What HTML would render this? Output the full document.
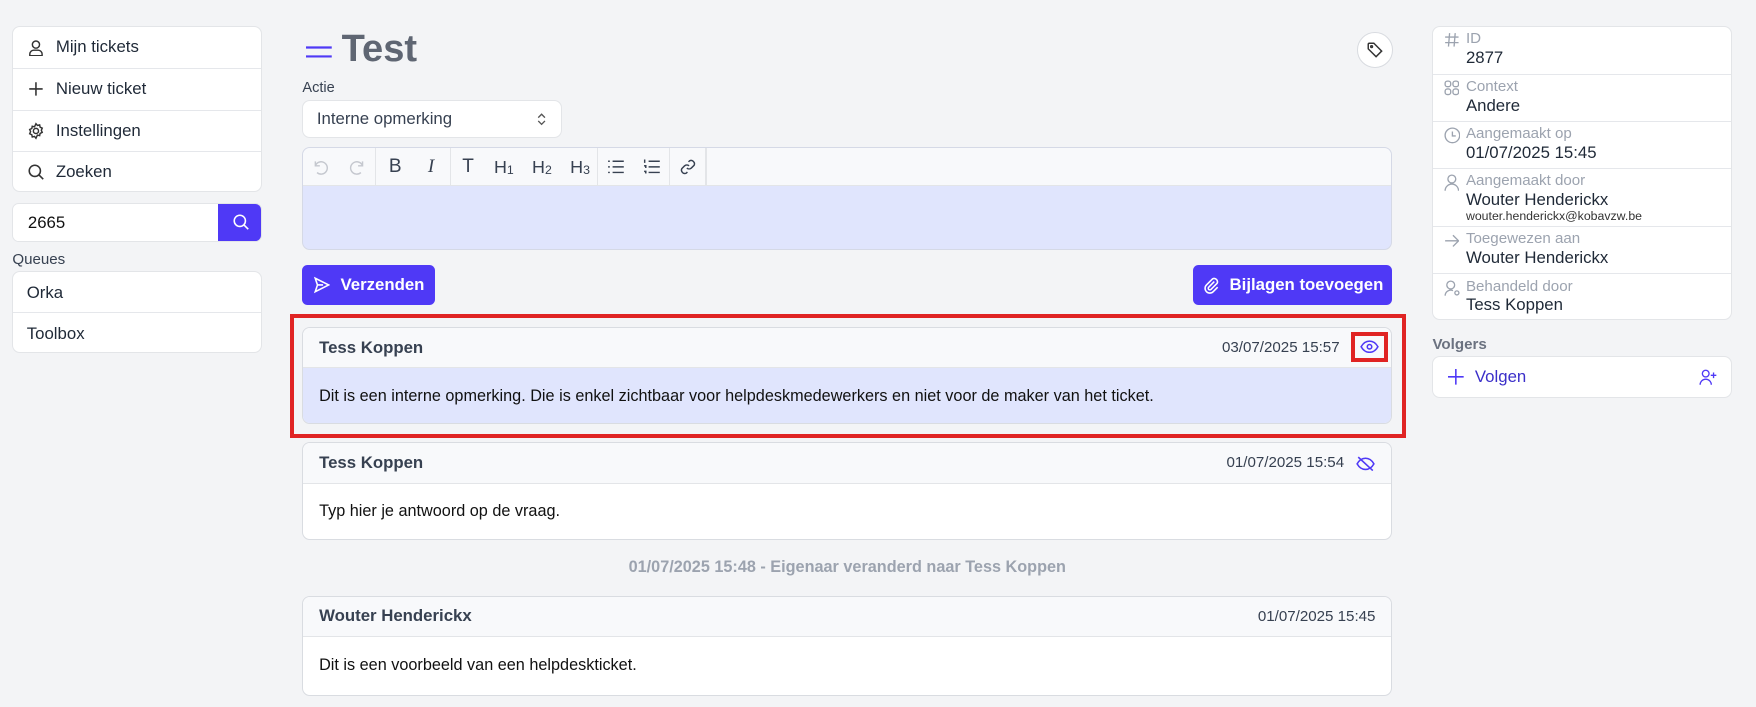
<!DOCTYPE html>
<html><head><meta charset="utf-8">
<style>
html,body{margin:0;padding:0;background:#f3f4f6;overflow:hidden}
body{width:1756px;height:707px}
#w{position:relative;width:1568px;height:631px;zoom:1.12;font-family:"Liberation Sans",sans-serif;color:#1f2937;font-size:15px}
.a{position:absolute}
.card{position:absolute;background:#fff;border:1px solid #e3e5e8;border-radius:7px;box-sizing:border-box;overflow:hidden}
.mi{position:absolute;left:0;right:0;height:37px;display:flex;align-items:center;padding-left:12px;gap:10px;border-top:1px solid #e5e7eb;box-sizing:border-box;font-size:15px}
.mi:first-child{border-top:none}
svg{display:block}
.btn{position:absolute;background:#4f39f6;color:#fff;border-radius:5px;font-weight:bold;font-size:15px;display:flex;align-items:center;justify-content:center;gap:9px}
.msg{position:absolute;left:270px;width:973px;background:#fff;border:1px solid #d9dce1;border-radius:7px;box-sizing:border-box;overflow:hidden}
.mh{height:35px;background:#f8f9fb;border-bottom:1px solid #e3e5e8;display:flex;align-items:center;padding:0 14px;font-weight:bold;color:#374151;font-size:15px;position:relative}
.mh .d{position:absolute;right:14px;font-weight:normal;font-size:13.5px;color:#374151}
.mb{height:50px;display:flex;align-items:center;padding:0 14px;font-size:14.5px;color:#111}
.ri{position:absolute;left:0;right:0;border-top:1px solid #e5e7eb;box-sizing:border-box;padding-left:29px}
.ri:first-child{border-top:none}
.ri .l{color:#9ca3af;font-size:13.5px;margin-top:3px;line-height:16px}
.ri .v{color:#1f2937;font-size:15px;line-height:18px}
.ri svg{position:absolute;left:9px;top:5px}
.tb{position:absolute;top:1px;height:33px;display:flex;align-items:center;justify-content:center;color:#374151}
.tb span{position:relative;top:2px}
</style></head><body><div id="w">

<div class="card" style="left:11px;top:23px;width:223px;height:148px">
 <div class="mi" style="top:0"><svg width="16" height="16" viewBox="0 0 16 16" fill="none" stroke="#333" stroke-width="1.3"><circle cx="8" cy="5" r="3.2"/><path d="M2.5 15v-1.5a3.5 3.5 0 0 1 3.5-3.5h4a3.5 3.5 0 0 1 3.5 3.5V15z"/></svg>Mijn tickets</div>
 <div class="mi" style="top:37px"><svg width="16" height="16" viewBox="0 0 16 16" stroke="#333" stroke-width="1.4"><path d="M8 2v12M2 8h12"/></svg>Nieuw ticket</div>
 <div class="mi" style="top:74px"><svg width="16" height="16" viewBox="0 0 16 16" fill="none" stroke="#333" stroke-width="1.3"><circle cx="8" cy="8" r="2.3"/><path d="M8 1.5l1.3 1.6 2-.5.4 2 1.9.9-.8 1.9.8 1.9-1.9.9-.4 2-2-.5L8 14.5l-1.3-1.6-2 .5-.4-2-1.9-.9.8-1.9-.8-1.9 1.9-.9.4-2 2 .5z"/></svg>Instellingen</div>
 <div class="mi" style="top:111px"><svg width="16" height="16" viewBox="0 0 16 16" fill="none" stroke="#333" stroke-width="1.4"><circle cx="7" cy="7" r="5"/><path d="M10.7 10.7L14.5 14.5"/></svg>Zoeken</div>
</div>
<div class="card" style="left:11px;top:181px;width:223px;height:35px;border-radius:6px">
 <div class="a" style="left:13px;top:8px;font-size:15px;color:#111">2665</div>
 <div class="a" style="left:183px;top:-1px;width:40px;height:35px;background:#4f39f6;display:flex;align-items:center;justify-content:center"><svg width="16" height="16" viewBox="0 0 16 16" fill="none" stroke="#fff" stroke-width="1.4"><circle cx="7" cy="7" r="5"/><path d="M10.7 10.7L14.5 14.5"/></svg></div>
</div>
<div class="a" style="left:11px;top:224px;font-size:13.5px;color:#374151">Queues</div>
<div class="card" style="left:11px;top:242px;width:223px;height:73px">
 <div class="mi" style="top:0;padding-left:12px">Orka</div>
 <div class="mi" style="top:36px;padding-left:12px">Toolbox</div>
</div>

<svg class="a" style="left:273px;top:38px" width="23" height="14" viewBox="0 0 23 14" stroke="#4f39f6" stroke-width="2"><path d="M0 4h23M0 12h23"/></svg>
<div class="a" style="left:305px;top:25px;font-size:34px;font-weight:bold;color:#5f6673">Test</div>
<div class="a" style="left:1212px;top:29px;width:32px;height:32px;border-radius:50%;background:#fff;border:1px solid #d8dbe0;box-sizing:border-box;display:flex;align-items:center;justify-content:center"><svg width="16" height="16" viewBox="0 0 16 16" fill="none" stroke="#333" stroke-width="1.3"><path d="M2 3v4l7 7 5-5-7-7H3a1 1 0 0 0-1 1z"/><circle cx="5" cy="5" r=".8"/></svg></div>
<div class="a" style="left:270px;top:71px;font-size:13px;color:#374151">Actie</div>
<div class="card" style="left:270px;top:89px;width:232px;height:34px">
 <div class="a" style="left:12px;top:7px;font-size:15px;color:#374151">Interne opmerking</div>
 <svg class="a" style="left:208px;top:10px" width="10" height="13" viewBox="0 0 10 13" fill="none" stroke="#555" stroke-width="1.2"><path d="M2 5l3-3 3 3M2 8l3 3 3-3"/></svg>
</div>
<div class="card" style="left:270px;top:131px;width:973px;height:92px;background:#e0e5fd;border-color:#d5d9e6">
 <div class="a" style="left:0;top:0;width:100%;height:33px;background:#f8f9fb;border-bottom:1px solid #e3e5e8"></div>
 <div class="tb" style="left:0;width:32px"><svg width="16" height="16" viewBox="0 0 16 16" fill="none" stroke="#c5c8cf" stroke-width="1.3"><path d="M3 3v4h4M3 7a5.5 5.5 0 1 1 1.5 6"/></svg></div>
 <div class="tb" style="left:32px;width:32px"><svg width="16" height="16" viewBox="0 0 16 16" fill="none" stroke="#c5c8cf" stroke-width="1.3"><path d="M13 3v4H9M13 7a5.5 5.5 0 1 0-1.5 6"/></svg></div>
 <div class="a" style="left:64px;top:0;width:1px;height:33px;background:#e3e5e8"></div>
 <div class="tb" style="left:66px;width:32px;font-size:17px">B</div>
 <div class="tb" style="left:98px;width:32px;font-size:17px;font-style:italic;font-family:'Liberation Serif',serif">I</div>
 <div class="a" style="left:131px;top:0;width:1px;height:33px;background:#e3e5e8"></div>
 <div class="tb" style="left:132px;width:30px;font-size:17px">T</div>
 <div class="tb" style="left:162px;width:34px;font-size:16px">H<span style="font-size:11px">1</span></div>
 <div class="tb" style="left:196px;width:34px;font-size:16px">H<span style="font-size:11px">2</span></div>
 <div class="tb" style="left:230px;width:34px;font-size:16px">H<span style="font-size:11px">3</span></div>
 <div class="a" style="left:262px;top:0;width:1px;height:33px;background:#e3e5e8"></div>
 <div class="tb" style="left:263px;width:32px"><svg width="16" height="14" viewBox="0 0 16 14" stroke="#374151" stroke-width="1.3"><path d="M5 2h10M5 7h10M5 12h10M1 2h1.5M1 7h1.5M1 12h1.5"/></svg></div>
 <div class="tb" style="left:295px;width:32px"><svg width="16" height="14" viewBox="0 0 16 14" stroke="#374151" stroke-width="1.3"><path d="M5 2h10M5 7h10M5 12h10M1.5 0.5v3M1 6h1.5v2M1 11h1.5v2"/></svg></div>
 <div class="a" style="left:326px;top:0;width:1px;height:33px;background:#e3e5e8"></div>
 <div class="tb" style="left:327px;width:32px"><svg width="16" height="16" viewBox="0 0 16 16" fill="none" stroke="#374151" stroke-width="1.3"><path d="M7 9a3 3 0 0 0 4 0l2.5-2.5a3 3 0 0 0-4-4L8.5 3.5M9 7a3 3 0 0 0-4 0L2.5 9.5a3 3 0 0 0 4 4l1-1"/></svg></div>
 <div class="a" style="left:359px;top:0;width:1px;height:33px;background:#e3e5e8"></div>
</div>

<div class="btn" style="left:270px;top:237px;width:118px;height:35px"><svg width="16" height="16" viewBox="0 0 16 16" fill="none" stroke="#fff" stroke-width="1.4"><path d="M2 2l12 6-12 6 2-6z M4 8h5"/></svg>Verzenden</div>
<div class="btn" style="left:1065px;top:237px;width:178px;height:35px"><svg width="16" height="16" viewBox="0 0 16 16" fill="none" stroke="#fff" stroke-width="1.4"><path d="M11 5l-5 5a1.4 1.4 0 0 0 2 2l5.5-5.5a3 3 0 0 0-4-4L4 8a4.2 4.2 0 0 0 6 6l4-4"/></svg>Bijlagen toevoegen</div>

<div class="a" style="left:259px;top:280px;width:996px;height:111px;border:4px solid #e02424;box-sizing:border-box"></div>
<div class="msg" style="top:292px;height:87px">
 <div class="mh">Tess Koppen<span class="d" style="right:46px">03/07/2025 15:57</span></div>
 <div class="mb" style="background:#e0e5fd">Dit is een interne opmerking. Die is enkel zichtbaar voor helpdeskmedewerkers en niet voor de maker van het ticket.</div>
</div>
<div class="a" style="left:1206px;top:296px;width:33px;height:27px;border:4px solid #e02424;box-sizing:border-box;display:flex;align-items:center;justify-content:center"><svg width="17" height="12" viewBox="0 0 17 12" fill="none" stroke="#4f39f6" stroke-width="1.4"><path d="M1 6c2-3.5 4.5-5 7.5-5s5.5 1.5 7.5 5c-2 3.5-4.5 5-7.5 5S3 9.5 1 6z"/><circle cx="8.5" cy="6" r="2"/></svg></div>

<div class="msg" style="top:395px;height:87px">
 <div class="mh">Tess Koppen<span class="d" style="right:42px">01/07/2025 15:54</span>
 <svg class="a" style="right:14px;top:11px" width="17" height="14" viewBox="0 0 17 14" fill="none" stroke="#4f39f6" stroke-width="1.4"><path d="M1 7c2-3.5 4.5-5 7.5-5s5.5 1.5 7.5 5c-2 3.5-4.5 5-7.5 5S3 10.5 1 7z"/><path d="M2 1l13 12"/></svg></div>
 <div class="mb">Typ hier je antwoord op de vraag.</div>
</div>
<div class="a" style="left:270px;width:973px;top:498px;text-align:center;font-weight:bold;font-size:14.5px;color:#9ca3af">01/07/2025 15:48 - Eigenaar veranderd naar Tess Koppen</div>
<div class="msg" style="top:532px;height:89px">
 <div class="mh">Wouter Henderickx<span class="d">01/07/2025 15:45</span></div>
 <div class="mb">Dit is een voorbeeld van een helpdeskticket.</div>
</div>

<div class="card" style="left:1279px;top:23px;width:267px;height:263px">
 <div class="ri" style="top:0;height:42px"><svg width="14" height="14" viewBox="0 0 14 14" stroke="#9ca3af" stroke-width="1.2"><path d="M5 1L4 13M10 1L9 13M1 4.5h12M1 9.5h12"/></svg><div class="l">ID</div><div class="v">2877</div></div>
 <div class="ri" style="top:42px;height:42px"><svg width="14" height="14" viewBox="0 0 14 14" fill="none" stroke="#9ca3af" stroke-width="1.2"><rect x="1" y="1" width="5" height="5" rx="2"/><rect x="8" y="1" width="5" height="5" rx="2"/><rect x="1" y="8" width="5" height="5" rx="2"/><rect x="8" y="8" width="5" height="5" rx="2"/></svg><div class="l">Context</div><div class="v">Andere</div></div>
 <div class="ri" style="top:84px;height:42px"><svg width="15" height="15" viewBox="0 0 15 15" fill="none" stroke="#9ca3af" stroke-width="1.2"><circle cx="7.5" cy="7.5" r="6.5"/><path d="M7.5 4v4h3"/></svg><div class="l">Aangemaakt op</div><div class="v">01/07/2025 15:45</div></div>
 <div class="ri" style="top:126px;height:52px"><svg width="14" height="15" viewBox="0 0 14 15" fill="none" stroke="#9ca3af" stroke-width="1.2"><circle cx="7" cy="4.5" r="3.5"/><path d="M1 15a6 6 0 0 1 12 0"/></svg><div class="l">Aangemaakt door</div><div class="v">Wouter Henderickx</div><div style="font-size:11px;color:#333;line-height:12px">wouter.henderickx@kobavzw.be</div></div>
 <div class="ri" style="top:178px;height:42px"><svg width="14" height="14" viewBox="0 0 14 14" fill="none" stroke="#9ca3af" stroke-width="1.2"><path d="M1 7h12M8 2l5 5-5 5"/></svg><div class="l">Toegewezen aan</div><div class="v">Wouter Henderickx</div></div>
 <div class="ri" style="top:220px;height:43px"><svg width="15" height="15" viewBox="0 0 15 15" fill="none" stroke="#9ca3af" stroke-width="1.2"><circle cx="6" cy="4.5" r="3.5"/><path d="M1 14a5 5 0 0 1 7-4.5"/><circle cx="11.5" cy="11.5" r="1.8"/></svg><div class="l">Behandeld door</div><div class="v">Tess Koppen</div></div>
</div>
<div class="a" style="left:1279px;top:300px;font-size:13.5px;font-weight:bold;color:#6b7280">Volgers</div>
<div class="card" style="left:1279px;top:318px;width:267px;height:37px">
 <svg class="a" style="left:13px;top:11px" width="14" height="14" viewBox="0 0 14 14" stroke="#4f39f6" stroke-width="1.4"><path d="M7 0v14M0 7h14"/></svg>
 <div class="a" style="left:37px;top:9px;color:#3b2fc9;font-size:15px">Volgen</div>
 <svg class="a" style="left:237px;top:10px" width="16" height="16" viewBox="0 0 16 16" fill="none" stroke="#4f39f6" stroke-width="1.2"><circle cx="6" cy="5" r="3"/><path d="M1 15a5 5 0 0 1 10 0M13 4v5M10.5 6.5h5"/></svg>
</div>

</div></body></html>
